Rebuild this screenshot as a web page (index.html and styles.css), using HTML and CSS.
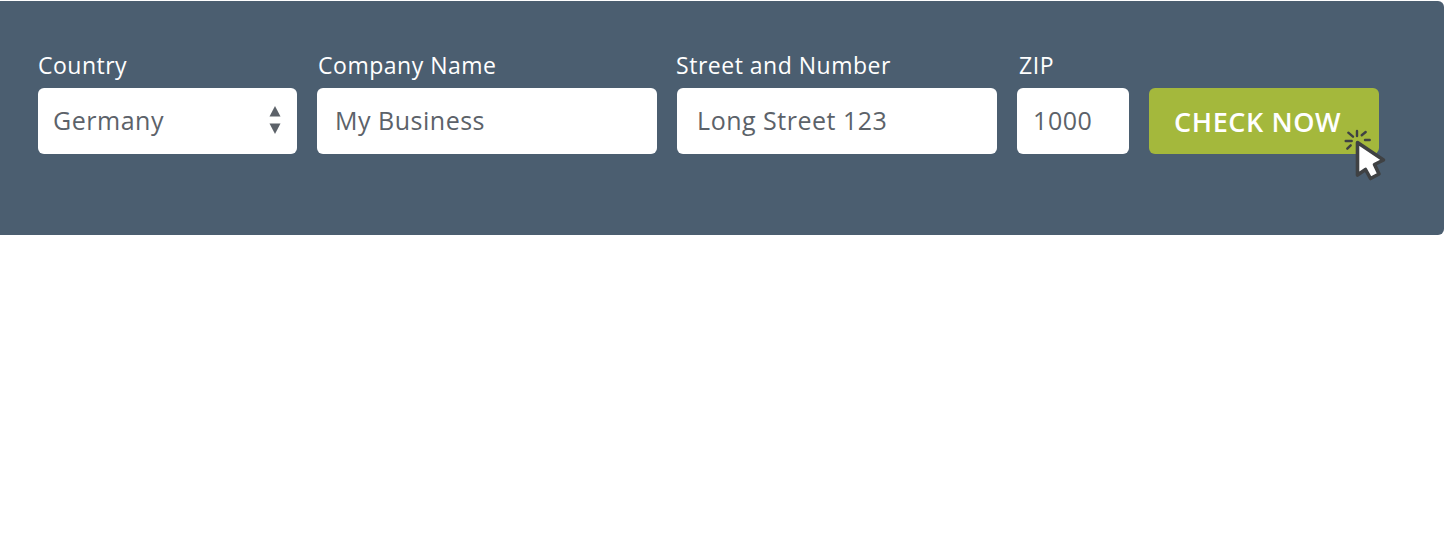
FILE: index.html
```html
<!DOCTYPE html>
<html>
  <head>
    <title>Company check</title>
    <link rel="stylesheet" href="styles.css">
  </head>
  <body>
    <form class="bar">
      <div class="field field-country">
        <span class="label">Country</span>
        <div class="box box-select">
          <span>Germany</span>
          <svg class="arrows" width="12" height="28" viewBox="0 0 12 28">
            <path d="M6 0 L11.5 10.5 L.5 10.5 Z"/>
            <path d="M.5 17.5 L11.5 17.5 L6 28 Z"/>
          </svg>
        </div>
      </div>

      <div class="field field-company">
        <span class="label">Company Name</span>
        <div class="box">My Business</div>
      </div>

      <div class="field field-street">
        <span class="label">Street and Number</span>
        <div class="box">Long Street 123</div>
      </div>

      <div class="field field-zip">
        <span class="label">ZIP</span>
        <div class="box">1000</div>
      </div>

      <div class="action">
        <button class="check" type="button">CHECK NOW</button>
        <svg class="pointer" width="46" height="56" viewBox="0 0 46 56">
          <g stroke="#3f4143" stroke-width="2.4" stroke-linecap="round">
            <path d="M14 3 L14 8"/>
            <path d="M18.7 7.3 L22.7 4"/>
            <path d="M22 12 L26.7 12"/>
            <path d="M5.3 4.7 L10 8.7"/>
            <path d="M2.7 13 L8.7 13"/>
            <path d="M4.3 20.7 L7.7 17.3"/>
          </g>
          <path d="M14.5 14.5 L40.5 32 L31.5 36.5 L36 46 L27.5 50.5 L22.5 41.5 L14.5 47 Z" fill="#fff" stroke="#3f4143" stroke-width="3.6" stroke-linejoin="round"/>
        </svg>
      </div>
    </form>
  </body>
</html>
```

FILE: styles.css
```css
body
{
  margin: 0;
  background-color: #FFF;
  font-family: "Open Sans", sans-serif;
}

.bar
{
  display: flex;
  align-items: flex-end;
  gap: 20px;
  height: 234px;
  margin-top: 1px;
  padding: 0 0 81px 37.6px;
  box-sizing: border-box;
  background-color: #4B5E70;
  border-radius: 0 6px 6px 0;
}

.field { display: flex; flex-direction: column; }

.field-country { width: 259.5px; }
.field-company { width: 340px; }
.field-street  { width: 320px; }
.field-zip     { width: 112px; }

.label
{
  margin-bottom: 7px;
  font-size: 23px;
  line-height: 32px;
  letter-spacing: .5px;
  color: #FFF;
}

.field-country .label { margin-left: .4px; }
.field-company .label { margin-left: 1px; }
.field-street .label  { margin-left: -1px; }
.field-zip .label     { margin-left: 2px; }

.box
{
  display: flex;
  align-items: center;
  justify-content: space-between;
  height: 66px;
  padding: 0 16px 2px 18px;
  box-sizing: border-box;
  background-color: #FFF;
  border-radius: 6px;
  font-size: 25px;
  letter-spacing: .5px;
  color: #5C6269;
}

.field-country .box { padding-left: 15.5px; }
.field-street .box  { padding-left: 20px; }
.field-zip .box     { padding-left: 16px; }

.arrows { fill: #5C6269; }

.action { position: relative; }

.check
{
  display: block;
  width: 230px;
  height: 66px;
  padding: 0 0 0 25px;
  border: 0;
  background-color: #A4B83C;
  border-radius: 6px;
  font-family: inherit;
  font-size: 27px;
  font-weight: 600;
  letter-spacing: .6px;
  text-align: left;
  color: #FFF;
}

.pointer
{
  position: absolute;
  left: 194px;
  top: 40px;
}
```
